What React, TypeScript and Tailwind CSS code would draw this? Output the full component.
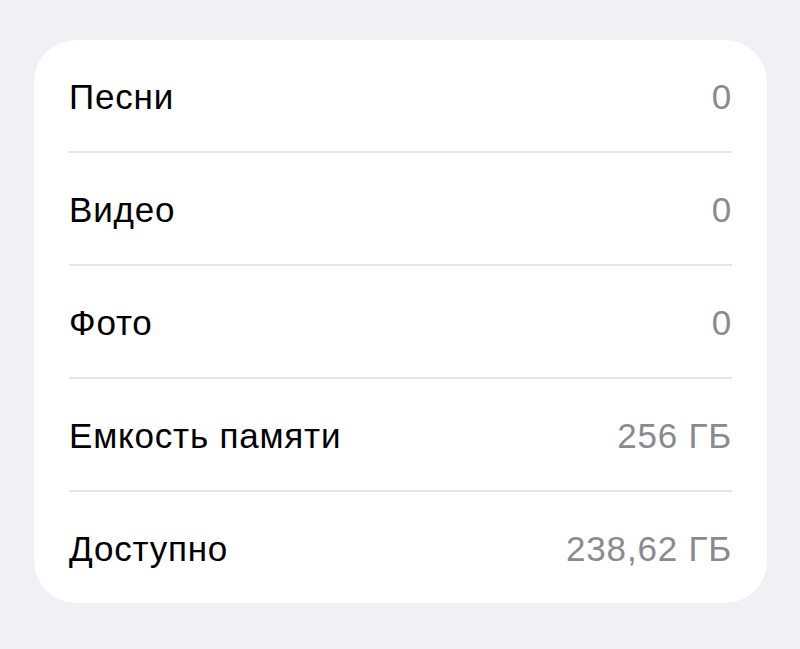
const rows = [
  { label: "Песни", value: "0" },
  { label: "Видео", value: "0" },
  { label: "Фото", value: "0" },
  { label: "Емкость памяти", value: "256 ГБ" },
  { label: "Доступно", value: "238,62 ГБ" },
];

export default function App() {
  return (
    <div className="min-h-[649px] w-full bg-[#f0f0f5] pt-[40px] pl-[34px]">
      <div
        className="w-[733px] rounded-[42px] bg-white px-[35px]"
        style={{ fontFamily: '"Liberation Sans", Arial, sans-serif' }}
      >
        {rows.map((row, i) => (
          <div key={row.label}>
            {i > 0 && <div className="h-[2px] bg-[#e6e6e9]" />}
            <div className="flex h-[111px] items-center justify-between pt-[4px] text-[35px] tracking-[0.8px]">
              <span className="text-black">{row.label}</span>
              <span className="text-[#8a8a8e]">{row.value}</span>
            </div>
          </div>
        ))}
      </div>
    </div>
  );
}
